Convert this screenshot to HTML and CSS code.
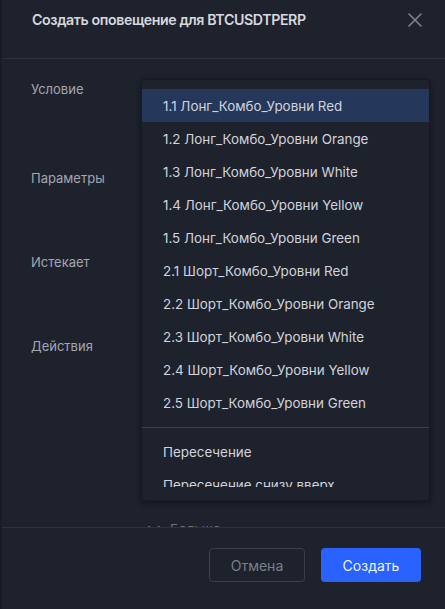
FILE: index.html
```html
<!DOCTYPE html>
<html lang="ru">
<head>
<meta charset="utf-8">
<title>Создать оповещение</title>
<link rel="stylesheet" href="styles.css">
</head>
<body>
<div class="dialog">
  <header class="head">
    <h1 class="title">Создать оповещение для BTCUSDTPERP</h1>
    <button class="close" aria-label="Закрыть">
      <svg width="14" height="14" viewBox="0 0 14 14"><path d="M1 1L13 13M13 1L1 13" stroke="#80838d" stroke-width="1.6" stroke-linecap="round"/></svg>
    </button>
  </header>
  <main class="content">
    <div class="row r1"><span class="label">Условие</span></div>
    <div class="row r2"><span class="label">Параметры</span></div>
    <div class="row r3"><span class="label">Истекает</span></div>
    <div class="row r4"><span class="label">Действия</span></div>
    <div class="more">
      <svg width="12" height="8" viewBox="0 0 12 8"><path d="M1 1.5L6 6.5L11 1.5" stroke="#6d707a" stroke-width="1.6" fill="none" stroke-linecap="round" stroke-linejoin="round"/></svg>
      <span>Больше</span>
    </div>
    <div class="menu">
      <div class="menu-scroll">
        <div class="item active">1.1 Лонг_Комбо_Уровни Red</div>
        <div class="item">1.2 Лонг_Комбо_Уровни Orange</div>
        <div class="item">1.3 Лонг_Комбо_Уровни White</div>
        <div class="item">1.4 Лонг_Комбо_Уровни Yellow</div>
        <div class="item">1.5 Лонг_Комбо_Уровни Green</div>
        <div class="item">2.1 Шорт_Комбо_Уровни Red</div>
        <div class="item">2.2 Шорт_Комбо_Уровни Orange</div>
        <div class="item">2.3 Шорт_Комбо_Уровни White</div>
        <div class="item">2.4 Шорт_Комбо_Уровни Yellow</div>
        <div class="item">2.5 Шорт_Комбо_Уровни Green</div>
        <div class="sep"></div>
        <div class="item">Пересечение</div>
        <div class="item">Пересечение снизу вверх</div>
        <div class="item">Пересечение сверху вниз</div>
      </div>
    </div>
  </main>
  <footer class="foot">
    <button class="btn cancel">Отмена</button>
    <button class="btn create">Создать</button>
  </footer>
</div>
</body>
</html>
```
FILE: styles.css
```css
* { box-sizing: border-box; }
html, body { margin: 0; padding: 0; }
body {
  width: 445px;
  height: 609px;
  overflow: hidden;
  background: #1e222d;
  font-family: Inter, "Noto Sans", sans-serif;
  color: #d1d4dc;
}
.dialog {
  height: 609px;
  display: flex;
  flex-direction: column;
  border-left: 2px solid #191c25;
}
.head {
  height: 59px;
  flex: none;
  display: flex;
  align-items: flex-start;
  justify-content: space-between;
  padding: 11px 23px 0 30px;
  border-bottom: 1px solid #2e323d;
}
.title {
  margin: 0;
  font-size: 14.2px;
  line-height: 18px;
  font-weight: 600;
  letter-spacing: -0.4px;
  color: #d6d8de;
}
.close {
  background: none;
  border: 0;
  padding: 0;
  margin-top: 2px;
  width: 14px;
  height: 14px;
  display: flex;
}
.content {
  position: relative;
  flex: 1;
  overflow: hidden;
  padding: 21px 0 0 29px;
}
.row { display: flex; align-items: flex-start; }
.label {
  font-size: 13px;
  line-height: 18px;
  color: #a4a7b0;
}
.r1 { height: 89px; }
.r2 { height: 84px; }
.r3 { height: 84px; }
.r4 { height: 183px; }
.more {
  display: flex;
  align-items: center;
  gap: 10px;
  margin-left: 117px;
  font-size: 13.4px;
  line-height: 18px;
  color: #6d707a;
}
.menu {
  position: absolute;
  left: 139px;
  top: 20px;
  width: 289px;
  height: 422px;
  background: #1e222d;
  border: 1px solid #171a22;
  border-radius: 3px;
  box-shadow: 0 2px 6px rgba(0, 0, 0, 0.45);
  padding-bottom: 13px;
}
.menu-scroll {
  height: 407px;
  overflow: hidden;
  padding-top: 9px;
}
.item {
  height: 33px;
  display: flex;
  align-items: center;
  padding-left: 21px;
  font-size: 13.4px;
  color: #d1d4dc;
  white-space: nowrap;
}
.item.active { background: #25375a; }
.sep {
  height: 1px;
  margin: 8px 0 7px;
  background: #3b3f4b;
}
.foot {
  height: 82px;
  flex: none;
  display: flex;
  justify-content: flex-end;
  align-items: flex-start;
  gap: 16px;
  padding: 20px 24px 0 0;
  border-top: 1px solid #2e323d;
}
.btn {
  height: 34px;
  border-radius: 4px;
  font-family: Inter, "Noto Sans", sans-serif;
  font-size: 14px;
}
.cancel {
  width: 96px;
  background: transparent;
  border: 1px solid #3a3e4a;
  color: #7c7f89;
}
.create {
  width: 100px;
  background: #2962ff;
  border: 0;
  color: #f0f3fa;
}
```
